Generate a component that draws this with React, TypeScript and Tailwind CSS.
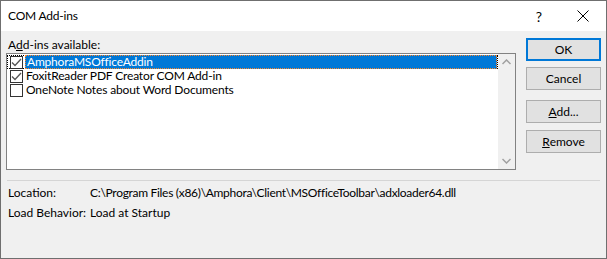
import React from 'react';

const font = { fontFamily: 'Lato, "Segoe UI", "Noto Sans", Arial, sans-serif' };

const Check = ({ checked }: { checked: boolean }) => (
  <span className="w-[13px] h-[13px] border border-[#333333] bg-white flex items-center justify-center shrink-0">
    {checked && (
      <svg width="11" height="11" viewBox="0 0 11 11">
        <path d="M1 5.5 L4 8.5 L10 2" fill="none" stroke="#555555" strokeWidth="1.3" />
      </svg>
    )}
  </span>
);

const items = [
  { name: 'AmphoraMSOfficeAddin', checked: true, selected: true },
  { name: 'FoxitReader PDF Creator COM Add-in', checked: true, selected: false },
  { name: 'OneNote Notes about Word Documents', checked: false, selected: false },
];

const Button = ({ children, primary }: { children: React.ReactNode; primary?: boolean }) => (
  <button
    className={`w-[75px] h-[23px] bg-[#e1e1e1] text-[12px] text-black flex items-center justify-center ${
      primary ? 'border-2 border-[#0078d7]' : 'border border-[#adadad]'
    }`}
  >
    {children}
  </button>
);

export default function App() {
  return (
    <div
      className="w-[607px] h-[259px] border border-[#6f6f6f] bg-[#f0f0f0] flex flex-col text-[12px] text-black"
      style={font}
    >
      {/* title bar */}
      <div className="h-[30px] bg-white flex items-center shrink-0">
        <span className="ml-[7px] tracking-[-0.2px]">COM Add-ins</span>
        <span className="ml-auto w-[14px] text-[14px] text-center">?</span>
        <span className="ml-[31px] mr-[17px] flex items-center">
          <svg width="12" height="12" viewBox="0 0 12 12">
            <path d="M0.5 0.5 L11.5 11.5 M11.5 0.5 L0.5 11.5" stroke="#000" strokeWidth="1" />
          </svg>
        </span>
      </div>

      <div className="flex">
        <div className="ml-[5px] flex flex-col">
          <div className="mt-[6px] h-[16px] leading-[16px] ml-[2px]">
            A<span className="underline">d</span>d-ins available:
          </div>
          <div className="w-[510px] h-[117px] border border-[#828282] bg-white flex">
            <div className="flex-1 pt-[1px]">
              {items.map((it) => (
                <div
                  key={it.name}
                  className={`h-[14px] flex items-center pl-[2px] ${
                    it.selected ? 'border border-dotted border-black' : 'border border-transparent'
                  }`}
                >
                  <Check checked={it.checked} />
                  {it.selected ? (
                    <span className="ml-[2px] flex-1 h-[14px] -my-[1px] bg-[#0078d7] text-white leading-[12px] pl-[1px] border border-dotted border-[#ff8728] whitespace-nowrap tracking-[-0.2px]">
                      {it.name}
                    </span>
                  ) : (
                    <span className="ml-[3px] leading-[12px] whitespace-nowrap tracking-[-0.15px]">{it.name}</span>
                  )}
                </div>
              ))}
            </div>
            <div className="w-[17px] bg-[#f0f0f0] flex flex-col justify-between items-center py-[5px]">
              <svg width="9" height="6" viewBox="0 0 9 6">
                <path d="M0.5 5 L4.5 1 L8.5 5" fill="none" stroke="#a0a0a0" strokeWidth="1.5" />
              </svg>
              <svg width="9" height="6" viewBox="0 0 9 6">
                <path d="M0.5 1 L4.5 5 L8.5 1" fill="none" stroke="#a0a0a0" strokeWidth="1.5" />
              </svg>
            </div>
          </div>
        </div>

        <div className="ml-[10px] flex flex-col pt-[7px]">
          <Button primary>OK</Button>
          <div className="h-[6px]" />
          <Button>Cancel</Button>
          <div className="h-[10px]" />
          <Button>
            <span className="underline">A</span>dd...
          </Button>
          <div className="h-[7px]" />
          <Button>
            <span className="underline">R</span>emove
          </Button>
        </div>
      </div>

      <div className="mx-[6px] mt-[10px] border-t border-[#d5d5d5]" />

      <div className="ml-[7px] mt-[4px] grid grid-cols-[82px_1fr] gap-y-[4px] leading-[16px] whitespace-nowrap">
        <span>Location:</span>
        <span className="tracking-[-0.3px]">C:\Program Files (x86)\Amphora\Client\MSOfficeToolbar\adxloader64.dll</span>
        <span>Load Behavior:</span>
        <span>Load at Startup</span>
      </div>
    </div>
  );
}
